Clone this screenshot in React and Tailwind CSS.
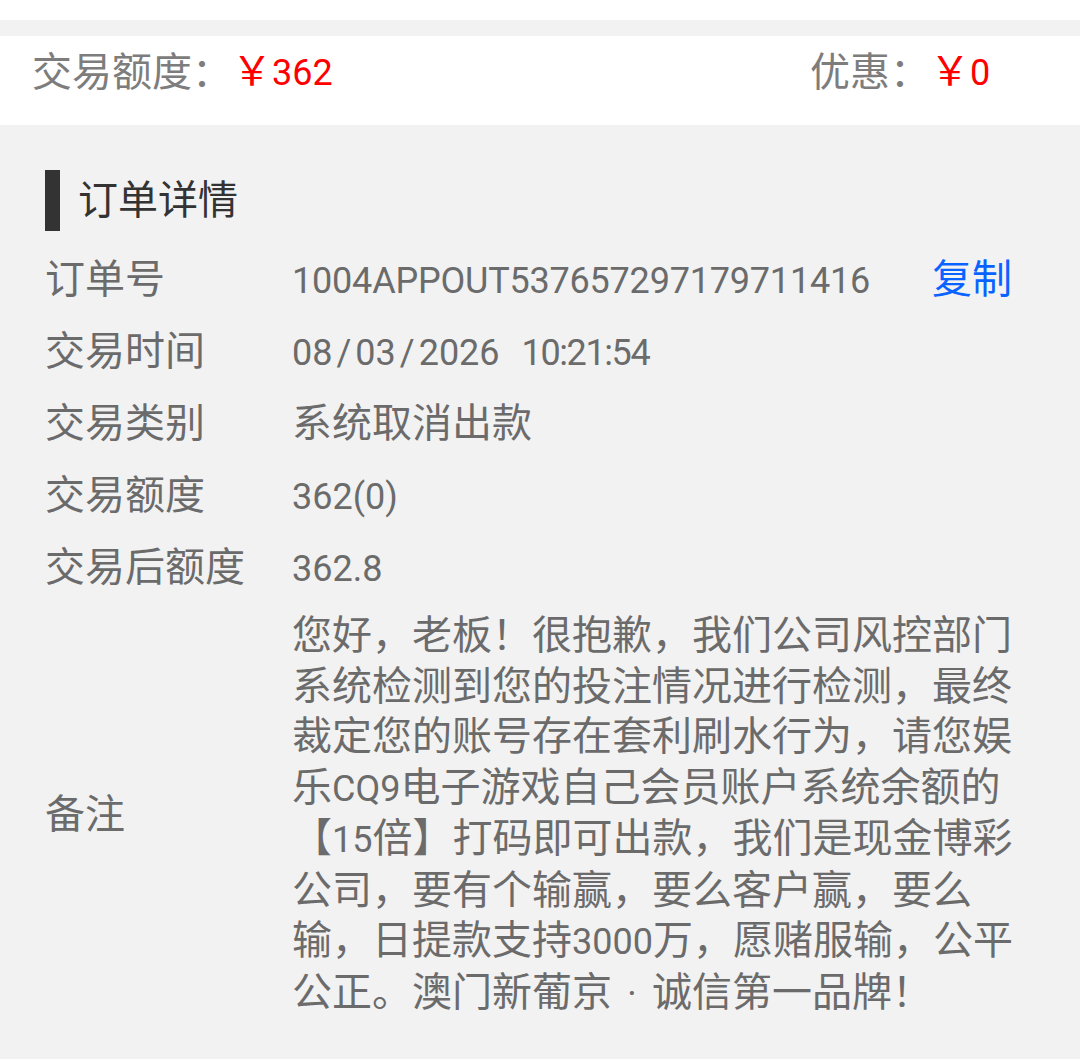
export default function App() {
  const Slash = () => <span className="mx-[4px]">/</span>;
  const rows = [
    { label: "订单号", value: <span className="text-[36px] tracking-[-0.2px]">1004APPOUT537657297179711416</span>, copy: true },
    {
      label: "交易时间",
      value: (
        <span className="text-[36px] whitespace-nowrap">
          08<Slash />03<Slash />2026
          <span className="ml-[22px] tracking-[-1.4px]">10:21:54</span>
        </span>
      ),
    },
    { label: "交易类别", value: "系统取消出款" },
    { label: "交易额度", value: <span className="text-[36px]">362(0)</span> },
    { label: "交易后额度", value: <span className="text-[36px]">362.8</span> },
  ];
  const L = ({ children }) => <span className="text-[36px]">{children}</span>;
  return (
    <div className="min-h-screen bg-[#f2f2f2] font-['Roboto','Noto_Sans_CJK_SC',sans-serif] text-[40px]">
      <div className="h-[20px] bg-white" />
      <div className="h-[16px]" />
      <div className="h-[89px] bg-white flex items-center pb-[16px]">
        <div className="w-3/4 pl-[32px] flex items-center leading-[40px]">
          <span className="text-[#7d7d7d]">交易额度：</span>
          <span className="text-[#ff0000]">￥<L>362</L></span>
        </div>
        <div className="w-1/4 flex items-center leading-[40px]">
          <span className="text-[#7d7d7d]">优惠：</span>
          <span className="text-[#ff0000]">￥<L>0</L></span>
        </div>
      </div>
      <div className="pl-[45px] pr-[64px] pt-[45px] pb-[40px]">
        <div className="h-[61px] flex items-center">
          <div className="w-[15px] h-[61px] bg-[#333333]" />
          <div className="ml-[18px] text-[#333333] leading-[40px]">订单详情</div>
        </div>
        <div className="mt-[13px]">
          {rows.map((r) => (
            <div key={r.label} className="h-[72px] flex items-center leading-[40px]">
              <div className="w-[247px] shrink-0 text-[#6b6b6b]">{r.label}</div>
              <div className="flex-1 text-[#6b6b6b]">{r.value}</div>
              {r.copy && <div className="mr-[4px] text-[#0a63ff]">复制</div>}
            </div>
          ))}
        </div>
        <div className="mt-[7px] flex items-center">
          <div className="w-[247px] shrink-0 text-[#6b6b6b] leading-[40px]">备注</div>
          <div className="w-[724px] text-[#6b6b6b] leading-[50.5px]">
            您好，老板！很抱歉，我们公司风控部门系统检测到您的投注情况进行检测，最终裁定您的账号存在套利刷水行为，请您娱乐<L>CQ9</L>电子游戏自己会员账户系统余额的【<L>15</L>倍】打码即可出款，我们是现金博彩公司，要有个输赢，要么客户赢，要么输，日提款支持<L>3000</L>万，愿赌服输，公平公正。澳门新葡京<span className="inline-block w-[40px] text-center text-[36px]">·</span>诚信第一品牌！
          </div>
        </div>
      </div>
    </div>
  );
}
